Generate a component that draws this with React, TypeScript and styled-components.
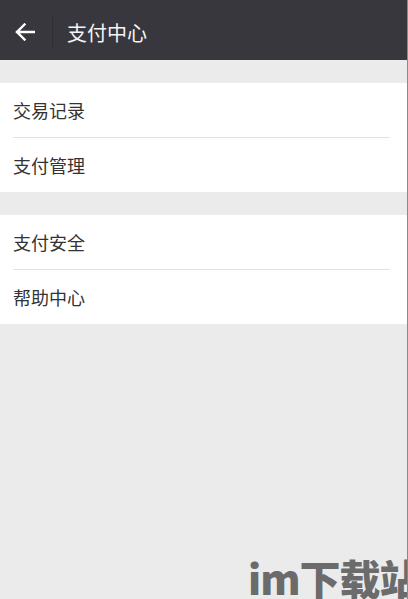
import React, { FC } from 'react'
import styled, { createGlobalStyle } from 'styled-components'

const GlobalStyle = createGlobalStyle`
  html, body {
    margin: 0;
    padding: 0;
    background: #ebebeb;
  }
  body {
    font-family: "Noto Sans CJK SC", "Noto Sans", sans-serif;
  }
`

const Page = styled.div`
  position: relative;
  width: 408px;
  height: 599px;
  overflow: hidden;
  background: #ebebeb;
  border-right: 1px solid #8a8a8a;
  box-sizing: border-box;
`

const Header = styled.header`
  height: 60px;
  background: #37373d;
  display: flex;
  align-items: center;
  padding-top: 4px;
  box-sizing: border-box;
`

const BackButton = styled.div`
  width: 52px;
  height: 100%;
  display: flex;
  align-items: center;
  justify-content: center;
  padding-right: 2px;
  box-sizing: border-box;
`

const Divider = styled.div`
  width: 1px;
  height: 32px;
  background: #2e2e33;
`

const Title = styled.h1`
  margin: 0 0 0 14px;
  font-size: 20px;
  font-weight: 400;
  color: #f4f4f4;
`

const Group = styled.section`
  background: #ffffff;
  margin-top: 23px;
`

const Row = styled.div`
  height: 54px;
  display: flex;
  align-items: center;
  padding-left: 13px;
  font-size: 18px;
  color: #333333;
`

const RowLine = styled.div`
  height: 1px;
  margin: 0 17px 0 13px;
  background: #e2e2e2;
`

const Watermark = styled.div`
  position: absolute;
  left: 248px;
  top: 557px;
  font-family: "Noto Sans CJK SC", sans-serif;
  font-weight: 900;
  font-size: 41px;
  line-height: 1;
  color: #6b6b6b;
  white-space: nowrap;
  letter-spacing: -1px;
`

const BackArrow: FC = () => (
  <svg width="20" height="18" viewBox="0 0 20 18" fill="none">
    <path d="M19 9H2M9.5 1.5L2 9l7.5 7.5" stroke="#ffffff" strokeWidth="2.4" strokeLinecap="square" />
  </svg>
)

const groups: string[][] = [
  ['交易记录', '支付管理'],
  ['支付安全', '帮助中心'],
]

export default function App() {
  return (
    <Page>
      <GlobalStyle />
      <Header>
        <BackButton>
          <BackArrow />
        </BackButton>
        <Divider />
        <Title>支付中心</Title>
      </Header>
      {groups.map((items, gi) => (
        <Group key={gi}>
          {items.map((label, i) => (
            <React.Fragment key={label}>
              {i > 0 && <RowLine />}
              <Row>{label}</Row>
            </React.Fragment>
          ))}
        </Group>
      ))}
      <Watermark>im下载站</Watermark>
    </Page>
  )
}
